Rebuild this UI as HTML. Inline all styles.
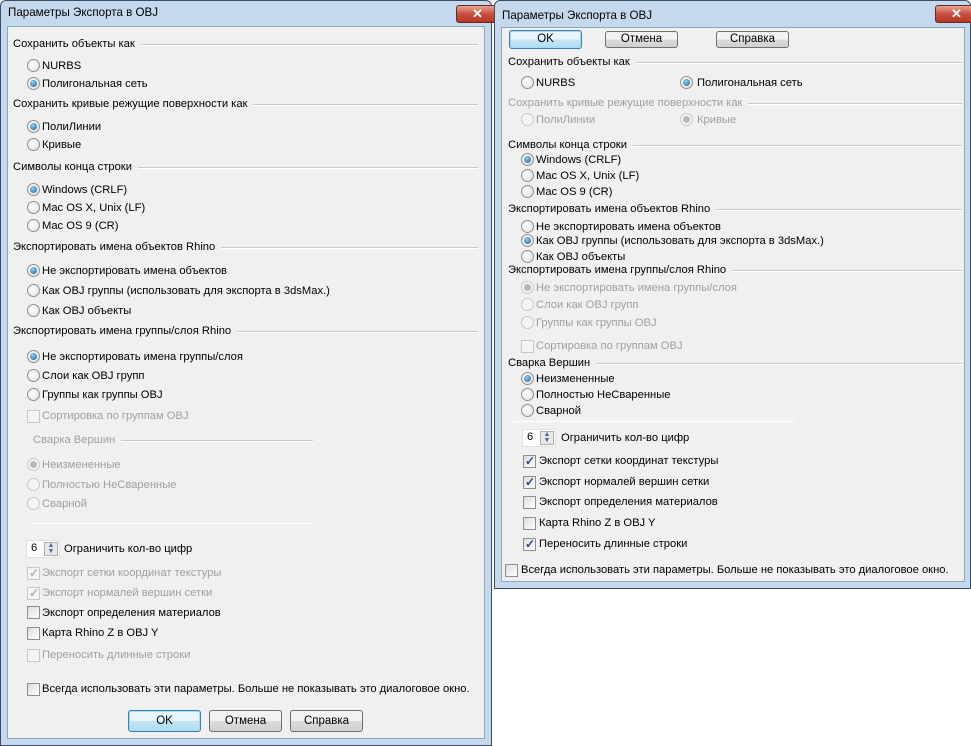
<!DOCTYPE html><html><head><meta charset="utf-8"><style>
*{margin:0;padding:0;box-sizing:border-box}
body{width:971px;height:746px;background:#fff;position:relative;overflow:hidden;font:11.2px "Liberation Sans",sans-serif;color:#000}
.w{position:absolute;background:#c4d8ee;border:1px solid #3c4d63;border-radius:6px 6px 0 0}
.c{position:absolute;background:#f0f0f0;border:1px solid #8fa6c0}
.ti{position:absolute;font-size:11.6px;color:#000}
.x{position:absolute;width:43px;height:18px;border-radius:3px;background:linear-gradient(#e8a493,#c75040 50%,#b53722);border:1px solid #6b2a20;color:#fff;font-weight:bold;text-align:center;line-height:16px;font-size:13px}
.t{position:absolute;white-space:nowrap;line-height:14px}
.h{position:absolute;white-space:nowrap;line-height:14px;display:flex;align-items:center;gap:6px}
.h::after{content:"";flex:1;height:1px;background:#c8c8c8;box-shadow:0 1px #fff}
.d{color:#a0a0a0}
.l{position:absolute;height:1px;background:#c8c8c8;border-bottom:1px solid #fff}
.r{position:absolute;width:13px;height:13px;border-radius:50%;border:1px solid #8e8f8f;background:radial-gradient(circle at 40% 40%,#fff,#dcdcdc)}
.r.on::after{content:"";position:absolute;left:2px;top:2px;width:7px;height:7px;border-radius:50%;background:radial-gradient(circle at 40% 35%,#8fd0f5,#1a5c9c)}
.r.dis{border-color:#c8c8c8;background:#f4f4f4}
.r.dis.on::after{background:#b8b8b8}
.k{position:absolute;width:13px;height:13px;border:1px solid #8e8f8f;background:linear-gradient(135deg,#dcdcdc,#fff)}
.k.dis{border-color:#c8c8c8;background:#f4f4f4}
.k.on::after{content:"✓";position:absolute;left:1px;top:-2px;font-size:12px;font-weight:bold;color:#2a4a8a}
.k.dis.on::after{color:#b0b0b0}
.b{position:absolute;border:1px solid #707070;border-radius:3px;background:linear-gradient(#f2f2f2 50%,#dcdcdc 50%,#d0d0d0);text-align:center;font-size:11.5px}
.b.def{border-color:#3c7fb1;background:linear-gradient(#e8f5fc 50%,#c4e5f6 50%,#b2dcf2);box-shadow:inset 0 0 0 1px #9fdcf7}
.sp{position:absolute;width:34px;height:18px;background:#fff;border:1px solid #e0e0e0}
.sp span{position:absolute;left:4px;top:1px}
.sp i{position:absolute;right:1px;top:1px;width:14px;height:14px;border:1px solid #b0b0b0;background:#e8e8e8;font-style:normal;font-size:7px;line-height:6px;text-align:center;color:#4a6a9a}
</style></head><body>

<!-- LEFT DIALOG -->
<div class="w" style="left:0;top:0;width:492px;height:746px"></div>
<div class="ti" style="left:8px;top:6px">Параметры Экспорта в OBJ</div>
<div class="x" style="left:456px;top:5px">✕</div>
<div class="c" style="left:7px;top:26px;width:478px;height:713px"></div>

<div class="h" style="left:13px;top:37px;width:465px">Сохранить объекты как</div>
<div class="r" style="left:27px;top:59px"></div><div class="t" style="left:42px;top:59px">NURBS</div>
<div class="r on" style="left:27px;top:77px"></div><div class="t" style="left:42px;top:77px">Полигональная сеть</div>
<div class="h" style="left:13px;top:97px;width:465px">Сохранить кривые режущие поверхности как</div>
<div class="r on" style="left:27px;top:120px"></div><div class="t" style="left:42px;top:120px">ПолиЛинии</div>
<div class="r" style="left:27px;top:138px"></div><div class="t" style="left:42px;top:138px">Кривые</div>
<div class="h" style="left:13px;top:160px;width:465px">Символы конца строки</div>
<div class="r on" style="left:27px;top:183px"></div><div class="t" style="left:42px;top:183px">Windows (CRLF)</div>
<div class="r" style="left:27px;top:201px"></div><div class="t" style="left:42px;top:201px">Mac OS X, Unix (LF)</div>
<div class="r" style="left:27px;top:219px"></div><div class="t" style="left:42px;top:219px">Mac OS 9 (CR)</div>
<div class="h" style="left:13px;top:240px;width:465px">Экспортировать имена объектов Rhino</div>
<div class="r on" style="left:27px;top:264px"></div><div class="t" style="left:42px;top:264px">Не экспортировать имена объектов</div>
<div class="r" style="left:27px;top:284px"></div><div class="t" style="left:42px;top:284px">Как OBJ группы (использовать для экспорта в 3dsMax.)</div>
<div class="r" style="left:27px;top:304px"></div><div class="t" style="left:42px;top:304px">Как OBJ объекты</div>
<div class="h" style="left:13px;top:324px;width:465px">Экспортировать имена группы/слоя Rhino</div>
<div class="r on" style="left:27px;top:350px"></div><div class="t" style="left:42px;top:350px">Не экспортировать имена группы/слоя</div>
<div class="r" style="left:27px;top:369px"></div><div class="t" style="left:42px;top:369px">Слои как OBJ групп</div>
<div class="r" style="left:27px;top:388px"></div><div class="t" style="left:42px;top:388px">Группы как группы OBJ</div>
<div class="k dis" style="left:27px;top:410px"></div><div class="t d" style="left:42px;top:409px">Сортировка по группам OBJ</div>
<div class="h d" style="left:33px;top:433px;width:280px">Сварка Вершин</div>
<div class="r dis on" style="left:27px;top:458px"></div><div class="t d" style="left:42px;top:458px">Неизмененные</div>
<div class="r dis" style="left:27px;top:478px"></div><div class="t d" style="left:42px;top:478px">Полностью НеСваренные</div>
<div class="r dis" style="left:27px;top:497px"></div><div class="t d" style="left:42px;top:497px">Сварной</div>
<div class="l" style="left:33px;top:523px;width:280px"></div>
<div class="sp" style="left:26px;top:540px"><span>6</span><i>▲<br>▼</i></div><div class="t" style="left:64px;top:542px">Ограничить кол-во цифр</div>
<div class="k dis on" style="left:27px;top:567px"></div><div class="t d" style="left:42px;top:566px">Экспорт сетки координат текстуры</div>
<div class="k dis on" style="left:27px;top:587px"></div><div class="t d" style="left:42px;top:586px">Экспорт нормалей вершин сетки</div>
<div class="k" style="left:27px;top:606px"></div><div class="t" style="left:42px;top:606px">Экспорт определения материалов</div>
<div class="k" style="left:27px;top:627px"></div><div class="t" style="left:42px;top:626px">Карта Rhino Z в OBJ Y</div>
<div class="k dis" style="left:27px;top:649px"></div><div class="t d" style="left:42px;top:648px">Переносить длинные строки</div>
<div class="k" style="left:27px;top:683px"></div><div class="t" style="left:42px;top:682px">Всегда использовать эти параметры. Больше не показывать это диалоговое окно.</div>
<div class="b def" style="left:128px;top:710px;width:73px;height:22px;line-height:20px">OK</div>
<div class="b" style="left:209px;top:710px;width:73px;height:22px;line-height:20px">Отмена</div>
<div class="b" style="left:290px;top:710px;width:73px;height:22px;line-height:20px">Справка</div>

<!-- RIGHT DIALOG -->
<div class="w" style="left:494px;top:0;width:477px;height:589px"></div>
<div class="ti" style="left:502px;top:9px">Параметры Экспорта в OBJ</div>
<div class="x" style="left:935px;top:5px">✕</div>
<div class="c" style="left:501px;top:27px;width:464px;height:555px"></div>
<div class="b def" style="left:509px;top:30px;width:73px;height:19px;line-height:17px">OK</div>
<div class="b" style="left:605px;top:31px;width:73px;height:17px;line-height:15px">Отмена</div>
<div class="b" style="left:716px;top:31px;width:73px;height:17px;line-height:15px">Справка</div>

<div class="h" style="left:508px;top:55px;width:454px">Сохранить объекты как</div>
<div class="r" style="left:521px;top:76px"></div><div class="t" style="left:536px;top:76px">NURBS</div>
<div class="r on" style="left:680px;top:76px"></div><div class="t" style="left:697px;top:76px">Полигональная сеть</div>
<div class="h d" style="left:508px;top:96px;width:454px">Сохранить кривые режущие поверхности как</div>
<div class="r dis" style="left:521px;top:113px"></div><div class="t d" style="left:536px;top:113px">ПолиЛинии</div>
<div class="r dis on" style="left:680px;top:113px"></div><div class="t d" style="left:697px;top:113px">Кривые</div>
<div class="h" style="left:508px;top:138px;width:454px">Символы конца строки</div>
<div class="r on" style="left:521px;top:153px"></div><div class="t" style="left:536px;top:153px">Windows (CRLF)</div>
<div class="r" style="left:521px;top:169px"></div><div class="t" style="left:536px;top:169px">Mac OS X, Unix (LF)</div>
<div class="r" style="left:521px;top:185px"></div><div class="t" style="left:536px;top:185px">Mac OS 9 (CR)</div>
<div class="h" style="left:508px;top:202px;width:454px">Экспортировать имена объектов Rhino</div>
<div class="r" style="left:521px;top:220px"></div><div class="t" style="left:536px;top:220px">Не экспортировать имена объектов</div>
<div class="r on" style="left:521px;top:234px"></div><div class="t" style="left:536px;top:234px">Как OBJ группы (использовать для экспорта в 3dsMax.)</div>
<div class="r" style="left:521px;top:250px"></div><div class="t" style="left:536px;top:250px">Как OBJ объекты</div>
<div class="h" style="left:508px;top:263px;width:454px">Экспортировать имена группы/слоя Rhino</div>
<div class="r dis on" style="left:521px;top:281px"></div><div class="t d" style="left:536px;top:281px">Не экспортировать имена группы/слоя</div>
<div class="r dis" style="left:521px;top:298px"></div><div class="t d" style="left:536px;top:298px">Слои как OBJ групп</div>
<div class="r dis" style="left:521px;top:316px"></div><div class="t d" style="left:536px;top:316px">Группы как группы OBJ</div>
<div class="k dis" style="left:521px;top:340px"></div><div class="t d" style="left:536px;top:339px">Сортировка по группам OBJ</div>
<div class="h" style="left:508px;top:356px;width:454px">Сварка Вершин</div>
<div class="r on" style="left:521px;top:372px"></div><div class="t" style="left:536px;top:372px">Неизмененные</div>
<div class="r" style="left:521px;top:388px"></div><div class="t" style="left:536px;top:388px">Полностью НеСваренные</div>
<div class="r" style="left:521px;top:404px"></div><div class="t" style="left:536px;top:404px">Сварной</div>
<div class="l" style="left:513px;top:421px;width:282px"></div>
<div class="sp" style="left:522px;top:429px"><span>6</span><i>▲<br>▼</i></div><div class="t" style="left:561px;top:431px">Ограничить кол-во цифр</div>
<div class="k on" style="left:523px;top:455px"></div><div class="t" style="left:539px;top:454px">Экспорт сетки координат текстуры</div>
<div class="k on" style="left:523px;top:476px"></div><div class="t" style="left:539px;top:475px">Экспорт нормалей вершин сетки</div>
<div class="k" style="left:523px;top:496px"></div><div class="t" style="left:539px;top:495px">Экспорт определения материалов</div>
<div class="k" style="left:523px;top:517px"></div><div class="t" style="left:539px;top:516px">Карта Rhino Z в OBJ Y</div>
<div class="k on" style="left:523px;top:538px"></div><div class="t" style="left:539px;top:537px">Переносить длинные строки</div>
<div class="k" style="left:505px;top:564px"></div><div class="t" style="left:521px;top:563px">Всегда использовать эти параметры. Больше не показывать это диалоговое окно.</div>
</body></html>
